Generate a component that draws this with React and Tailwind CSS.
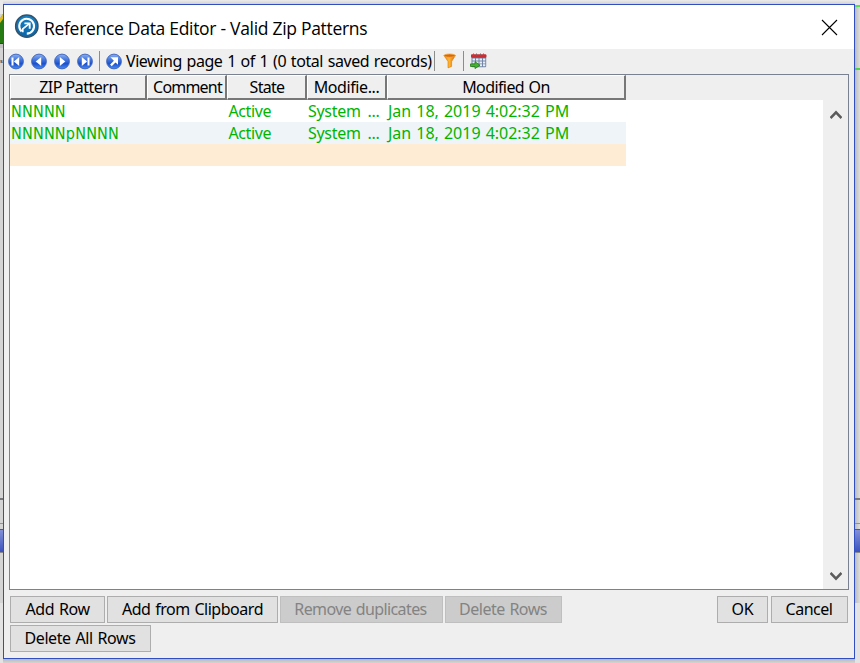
import React from "react";

const TEXT = "font-['Noto_Sans',sans-serif] text-[16px] whitespace-nowrap";

function NavIcon({ children, id }) {
  return (
    <svg width="17" height="17" viewBox="0 0 17 17" className="shrink-0">
      <defs>
        <linearGradient id={id} x1="0" y1="0" x2="0" y2="1">
          <stop offset="0" stopColor="#8fb0ee" />
          <stop offset="0.35" stopColor="#4a7ce0" />
          <stop offset="0.65" stopColor="#1c50cc" />
          <stop offset="1" stopColor="#4b90f5" />
        </linearGradient>
      </defs>
      <circle cx="8" cy="8.5" r="7.4" fill={`url(#${id})`} stroke="#3c61b8" strokeWidth="0.9" />
      <g transform="translate(-0.5 0)">{children}</g>
    </svg>
  );
}

function AppLogo() {
  return (
    <svg width="26" height="26" viewBox="0 0 26 26" className="shrink-0">
      <defs>
        <linearGradient id="logo" x1="0" y1="0" x2="0" y2="1">
          <stop offset="0" stopColor="#1683c6" />
          <stop offset="1" stopColor="#0864a8" />
        </linearGradient>
      </defs>
      <circle cx="12.8" cy="12.2" r="11.2" fill="url(#logo)" stroke="#34536b" strokeWidth="1.4" />
      <path d="M7.6 17.6A7.4 7.4 0 1 1 12.8 19.6" fill="none" stroke="#fff" strokeWidth="2.1" />
      <path d="M8.8 18.2V14.8L15 9.8" fill="none" stroke="#fff" strokeWidth="1.7" />
      <path d="M10.4 9.4h5.3v5.3" fill="none" stroke="#fff" strokeWidth="1.9" />
    </svg>
  );
}

function Funnel() {
  return (
    <svg width="14" height="16" viewBox="0 0 14 16" className="shrink-0">
      <defs>
        <linearGradient id="funnel" x1="0" y1="0" x2="1" y2="0">
          <stop offset="0" stopColor="#f08a12" />
          <stop offset="0.45" stopColor="#ffb833" />
          <stop offset="1" stopColor="#d8640a" />
        </linearGradient>
      </defs>
      <path d="M1 2.5L5 8.5V14.9L8.6 13.4V8.5L12.4 2.5Z" fill="url(#funnel)" stroke="#d9770f" strokeWidth="0.6" />
      <ellipse cx="6.6" cy="2.6" rx="5.7" ry="1.6" fill="#d9650c" stroke="#f3a63a" strokeWidth="0.8" />
    </svg>
  );
}

function CalendarArrow() {
  return (
    <svg width="17" height="16" viewBox="0 0 17 16" className="shrink-0">
      <rect x="1.5" y="2" width="14.7" height="12.3" rx="1" fill="#7485a6" />
      <rect x="1" y="1.2" width="15.4" height="3.6" rx="1" fill="#c92d32" />
      <path d="M3.5 0.5v2M6.5 0.5v2M10.5 0.5v2M13.5 0.5v2" stroke="#8d5c60" strokeWidth="1" />
      <path d="M2.5 5.4h2.5v2H2.5zM6 5.4h2.5v2H6zM9.5 5.4h2.5v2H9.5zM13 5.4h2.3v2H13zM2.5 8.4h2.5v2H2.5zM6 8.4h2.5v2H6zM9.5 8.4h2.5v2H9.5zM13 8.4h2.3v2H13zM9.5 11.3h2.5v2H9.5zM13 11.3h2.3v2H13z" fill="#e9effa" />
      <path d="M0.5 10.9H5V8.7L10 12.2L5 15.6V13.5H0.5Z" fill="#43b52c" stroke="#247b1b" strokeWidth="0.8" />
    </svg>
  );
}

function Header({ width, spacing, children }) {
  return (
    <div className={`${width} h-[25px] shrink-0 border-t border-l border-t-white border-l-white border-r-2 border-b-2 border-r-[#777] border-b-[#777] bg-[#efefef] text-center text-black`}>
      <div className={`${TEXT} ${spacing} mt-px leading-[20px]`}>{children}</div>
    </div>
  );
}

function Row({ pattern, bg }) {
  return (
    <div className={`flex h-[22px] w-[616px] ${bg} text-[#00b400]`}>
      <div className="w-[218px] whitespace-nowrap pl-px pt-px font-['DejaVu_Sans_Condensed','DejaVu_Sans',sans-serif] text-[16px] leading-[22px] tracking-[0.2px] [font-stretch:condensed]">{pattern}</div>
      <div className={`${TEXT} w-[80px] pl-[0.5px] leading-[22px] tracking-[-0.4px]`}>Active</div>
      <div className={`${TEXT} w-[79px] leading-[22px] tracking-[-0.3px] [word-spacing:3px]`}>System ...</div>
      <div className={`${TEXT} pl-px leading-[22px] tracking-[-0.02px] [word-spacing:1px]`}>Jan 18, 2019 4:02:32 PM</div>
    </div>
  );
}

function Button({ width, disabled, spacing, children }) {
  const tone = disabled ? "border-[#bfbfbf] bg-[#cccccc] text-[#838383]" : "border-[#adadad] bg-[#e1e1e1] text-black";
  return (
    <button disabled={disabled} className={`${TEXT} ${width} ${spacing} ${tone} flex h-[27px] shrink-0 items-center justify-center border pb-[2px] leading-[20px]`}>
      {children}
    </button>
  );
}

function Strip({ left }) {
  return (
    <div className={`flex h-[663px] shrink-0 flex-col overflow-hidden ${left ? "w-[3px] bg-[#d4d4d4]" : "w-[5px] bg-gradient-to-r from-[#bcbcbc] to-[#dddddd]"}`}>
      {left ? (
        <>
          <div className="h-[14px] shrink-0 bg-[#e9e9e9]" />
          <svg width="3" height="34" viewBox="0 0 3 34" className="shrink-0">
            <path d="M0 5L3 0V34H0Z" fill="#267b13" />
            <path d="M0 4L3 0V5L0 9Z" fill="#e1bd22" />
            <path d="M0 29h3v1H0z" fill="#244e1c" />
            <path d="M0 30h3v4H0z" fill="#c0c0c0" />
          </svg>
          <div className="h-[20px] shrink-0 pt-[7px] font-['Noto_Sans',sans-serif] text-[6px] leading-[12px] text-[#222]">s</div>
        </>
      ) : (
        <>
          <div className="h-[5px] shrink-0 bg-[#e9e9e9]" />
          <div className="h-[2px] shrink-0 bg-[#59de59]" />
          <div className="h-[61px] shrink-0" />
          <div className="h-[2px] shrink-0 bg-[#4fd14f]" />
        </>
      )}
      <div className="grow" />
      <div className="h-[2px] shrink-0 bg-[#75777a]" />
      <div className="h-[23px] shrink-0" />
      <div className="h-px shrink-0 bg-[#929292]" />
      <div className="h-[5px] shrink-0" />
      <div className="h-[24px] shrink-0 border-y border-t-[#4057b5] border-b-[#888] bg-gradient-to-b from-[#8390d6] to-[#3d51bd]" />
      <div className="h-[50px] shrink-0" />
      <div className="h-[60px] shrink-0 bg-[#e3e3e3]" />
    </div>
  );
}

const Divider = () => <div className="h-[20px] w-px shrink-0 bg-[#8c8c8c]" />;

export default function App() {
  return (
    <div className="flex h-[663px] w-[860px] overflow-hidden bg-[#e2e2e2]">
      <Strip left />
      <div className="flex h-[663px] w-[852px] shrink-0 flex-col">
        <div className="h-[4px] shrink-0 bg-gradient-to-b from-[#ececec] to-[#d2d2d2]" />
        <div className="flex h-[655px] shrink-0 flex-col border border-[#304ec0] bg-[#efefef]">
          <div className="flex h-[44px] shrink-0 items-center bg-white pl-[10px] pr-[16px]">
            <AppLogo />
            <h1 className="ml-[4px] mt-px whitespace-nowrap font-['Open_Sans',sans-serif] text-[17.5px] leading-[24px] tracking-[-0.3px] text-black">
              Reference Data Editor - Valid Zip Patterns
            </h1>
            <svg width="17" height="17" viewBox="0 0 17 17" className="ml-auto">
              <path d="M1 1L16 16M16 1L1 16" stroke="#000" strokeWidth="1.1" />
            </svg>
          </div>

          <div className="flex h-[25px] shrink-0 items-center pb-px pl-[4px]">
            <div className="flex gap-[6px]">
              <NavIcon id="n1"><path d="M4 4.5h2v8H4zM11.7 4v9L6.4 8.5z" fill="#fff" /></NavIcon>
              <NavIcon id="n2"><path d="M10.7 4v9L5.2 8.5z" fill="#fff" /></NavIcon>
              <NavIcon id="n3"><path d="M6.3 4v9L11.8 8.5z" fill="#fff" /></NavIcon>
              <NavIcon id="n4"><path d="M11 4.5h2v8H11zM5.3 4v9L10.6 8.5z" fill="#fff" /></NavIcon>
            </div>
            <div className="ml-[5px]"><Divider /></div>
            <div className="ml-[6px]">
              <NavIcon id="n5"><path d="M5 4.3h7.5v7.5l-2.5-2.4-3.8 3.8-1.6-1.6 3.8-3.8z" fill="#fff" /></NavIcon>
            </div>
            <div className={`${TEXT} ml-[3px] w-[308px] pb-px leading-[20px] tracking-[-0.44px] [word-spacing:1px]`}>Viewing page 1 of 1 (0 total saved records)</div>
            <Divider />
            <div className="ml-[8px]"><Funnel /></div>
            <div className="ml-[6px]"><Divider /></div>
            <div className="ml-[6px]"><CalendarArrow /></div>
          </div>

          <div className="mx-[5px] flex h-[516px] shrink-0 flex-col border border-[#7a8190] bg-white">
            <div className="flex h-[25px] shrink-0 bg-[#efefef]">
              <Header width="w-[137px]" spacing="pl-px tracking-[-0.5px]">ZIP Pattern</Header>
              <Header width="w-[80px]" spacing="pl-[2px] tracking-[-0.8px]">Comment</Header>
              <Header width="w-[80px]" spacing="pl-px tracking-[-0.7px]">State</Header>
              <Header width="w-[80px]" spacing="tracking-[-0.4px]">Modifie...</Header>
              <Header width="w-[239px]" spacing="tracking-[-0.6px] [word-spacing:1px]">Modified On</Header>
            </div>
            <div className="flex grow">
              <div className="grow">
                <Row pattern="NNNNN" bg="bg-white" />
                <Row pattern="NNNNNpNNNN" bg="bg-[#eff4f9]" />
                <div className="h-[22px] w-[616px] bg-[#ffecd5]" />
              </div>
              <div className="flex w-[25px] flex-col items-center justify-between bg-[#efefef] pb-[8px] pt-[10px]">
                <svg width="12" height="9" viewBox="0 0 12 9"><path d="M0.5 8L6 2.4L11.5 8" fill="none" stroke="#5b5b5b" strokeWidth="2.6" /></svg>
                <svg width="12" height="9" viewBox="0 0 12 9"><path d="M0.5 1L6 6.6L11.5 1" fill="none" stroke="#5b5b5b" strokeWidth="2.6" /></svg>
              </div>
            </div>
          </div>

          <div className="flex shrink-0 justify-between px-[6px] pt-[6px]">
            <div className="flex w-[560px] flex-wrap gap-[2px]">
              <Button width="w-[95px]" spacing="tracking-[-0.4px] [word-spacing:1px]">Add Row</Button>
              <Button width="w-[171px]" spacing="tracking-[-0.47px] [word-spacing:1px]">Add from Clipboard</Button>
              <Button width="w-[163px]" spacing="pr-[2px] tracking-[-0.6px] [word-spacing:1px]" disabled>Remove duplicates</Button>
              <Button width="w-[117px]" spacing="pr-px tracking-[-0.5px] [word-spacing:1px]" disabled>Delete Rows</Button>
              <Button width="w-[141px]" spacing="pr-px tracking-[-0.4px] [word-spacing:1px]">Delete All Rows</Button>
            </div>
            <div className="flex gap-[3px]">
              <Button width="w-[51px]" spacing="tracking-[-0.3px]">OK</Button>
              <Button width="w-[77px]" spacing="pr-px tracking-[-0.5px]">Cancel</Button>
            </div>
          </div>
        </div>
        <div className="h-[4px] shrink-0 bg-gradient-to-b from-[#b9b9b9] to-[#d4d4d4]" />
      </div>
      <Strip />
    </div>
  );
}
